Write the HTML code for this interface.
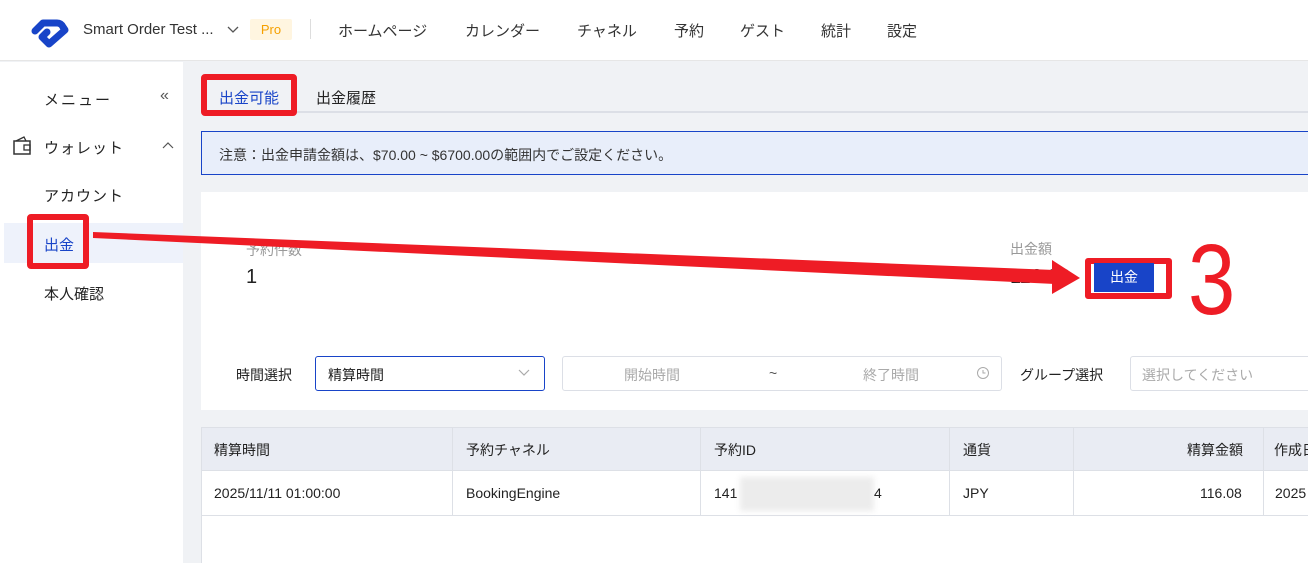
<!DOCTYPE html>
<html><head><meta charset="utf-8"><style>
*{box-sizing:border-box;margin:0;padding:0}
body{width:1308px;height:563px;overflow:hidden;position:relative;background:#f0f2f5;font-family:"Liberation Sans","Noto Sans CJK JP",sans-serif;color:#222;font-size:14px}
.a{position:absolute;white-space:nowrap}
</style></head><body>
<div class="a" style="left:0;top:0;width:1308px;height:61px;background:#fff;border-bottom:1px solid #e6e6e6"></div>
<svg class="a" style="left:25px;top:8px" width="50" height="42" viewBox="0 0 50 42"><path d="M10 23 L18 15 L32 15 Q36 15 38 19 L40 22 L24 36 L17 29 L22 24" fill="none" stroke="#1844c8" stroke-width="7" stroke-linejoin="round" stroke-linecap="round"/></svg>
<div class="a" style="left:83px;top:21px;font-size:15px;color:#333">Smart Order Test ...</div>
<svg class="a" style="left:227px;top:25px" width="12" height="10"><path d="M1 2 L6 7 L11 2" stroke="#555" fill="none" stroke-width="1.3"/></svg>
<div class="a" style="left:250px;top:19px;width:42px;height:21px;background:#fff5e0;color:#f5a000;font-size:13px;text-align:center;line-height:21px;border-radius:2px">Pro</div>
<div class="a" style="left:310px;top:19px;width:1px;height:20px;background:#ddd"></div>
<div class="a" style="left:338px;top:20px;font-size:15px;color:#333">ホームページ</div>
<div class="a" style="left:465px;top:20px;font-size:15px;color:#333">カレンダー</div>
<div class="a" style="left:577px;top:20px;font-size:15px;color:#333">チャネル</div>
<div class="a" style="left:674px;top:20px;font-size:15px;color:#333">予約</div>
<div class="a" style="left:740px;top:20px;font-size:15px;color:#333">ゲスト</div>
<div class="a" style="left:821px;top:20px;font-size:15px;color:#333">統計</div>
<div class="a" style="left:887px;top:20px;font-size:15px;color:#333">設定</div>

<div class="a" style="left:0;top:62px;width:183px;height:501px;background:#fff"></div>
<div class="a" style="left:44px;top:89px;font-size:15px;letter-spacing:2px">メニュー</div>
<div class="a" style="left:160px;top:87px;font-size:16px;color:#555">«</div>
<svg class="a" style="left:12px;top:136px" width="22" height="20"><rect x="2" y="5" width="16" height="13" fill="none" stroke="#333" stroke-width="1.5"/><path d="M4 5 L12 1 L14 5" fill="none" stroke="#333" stroke-width="1.3"/><rect x="12" y="9" width="6" height="5" fill="none" stroke="#333" stroke-width="1.3"/></svg>
<div class="a" style="left:44px;top:137px;font-size:15px;letter-spacing:1px">ウォレット</div>
<svg class="a" style="left:162px;top:142px" width="12" height="8"><path d="M1 6 L6 1 L11 6" stroke="#555" fill="none" stroke-width="1.2"/></svg>
<div class="a" style="left:44px;top:185px;font-size:15px;letter-spacing:1px">アカウント</div>
<div class="a" style="left:4px;top:223px;width:179px;height:40px;background:#eef2fb"></div>
<div class="a" style="left:44px;top:234px;font-size:15px;color:#1844c8">出金</div>
<div class="a" style="left:44px;top:283px;font-size:15px">本人確認</div>

<div class="a" style="left:201px;top:111px;width:1107px;height:2px;background:#dcdfe6"></div>
<div class="a" style="left:219px;top:87px;font-size:15px;color:#1844c8">出金可能</div>
<div class="a" style="left:316px;top:87px;font-size:15px">出金履歴</div>

<div class="a" style="left:201px;top:131px;width:1110px;height:44px;background:#e8eefa;border:1px solid #1844c8"></div>
<div class="a" style="left:219px;top:145px;font-size:14px;color:#333">注意：出金申請金額は、$70.00 ~ $6700.00の範囲内でご設定ください。</div>

<div class="a" style="left:201px;top:192px;width:1107px;height:218px;background:#fff"></div>
<div class="a" style="left:246px;top:240px;font-size:14px;color:#999">予約件数</div>
<div class="a" style="left:246px;top:266px;font-size:20px;color:#222">1</div>
<div class="a" style="left:1010px;top:239px;font-size:14px;color:#999">出金額</div>
<div class="a" style="left:1010px;top:266px;font-size:20px;color:#222">116.08</div>

<div class="a" style="left:236px;top:365px;font-size:14px">時間選択</div>
<div class="a" style="left:315px;top:356px;width:230px;height:35px;border:1px solid #1844c8;border-radius:3px;background:#fff"></div>
<div class="a" style="left:328px;top:365px;font-size:14px">精算時間</div>
<svg class="a" style="left:518px;top:369px" width="12" height="8"><path d="M1 1 L6 6 L11 1" stroke="#aaa" fill="none" stroke-width="1.2"/></svg>
<div class="a" style="left:562px;top:356px;width:440px;height:35px;border:1px solid #dcdfe6;border-radius:3px;background:#fff"></div>
<div class="a" style="left:624px;top:365px;font-size:14px;color:#aaa">開始時間</div>
<div class="a" style="left:769px;top:365px;font-size:14px;color:#555">~</div>
<div class="a" style="left:863px;top:365px;font-size:14px;color:#aaa">終了時間</div>
<svg class="a" style="left:976px;top:366px" width="14" height="14"><circle cx="7" cy="7" r="5.5" fill="none" stroke="#aaa"/><path d="M7 4 V7 H9.5" fill="none" stroke="#aaa"/></svg>
<div class="a" style="left:1020px;top:365px;font-size:14px">グループ選択</div>
<div class="a" style="left:1130px;top:356px;width:190px;height:35px;border:1px solid #dcdfe6;border-radius:3px;background:#fff"></div>
<div class="a" style="left:1142px;top:365px;font-size:14px;color:#aaa">選択してください</div>

<div class="a" style="left:201px;top:427px;width:1107px;height:136px;background:#fff"></div>
<div class="a" style="left:201px;top:427px;width:1107px;height:44px;background:#e9ecf3;border-top:1px solid #dde0e6;border-bottom:1px solid #dde0e6"></div>
<div class="a" style="left:201px;top:515px;width:1107px;height:1px;background:#dde0e6"></div>
<div class="a" style="left:201px;top:427px;width:1px;height:136px;background:#dde0e6"></div>
<div class="a" style="left:452px;top:427px;width:1px;height:89px;background:#dde0e6"></div>
<div class="a" style="left:700px;top:427px;width:1px;height:89px;background:#dde0e6"></div>
<div class="a" style="left:949px;top:427px;width:1px;height:89px;background:#dde0e6"></div>
<div class="a" style="left:1073px;top:427px;width:1px;height:89px;background:#dde0e6"></div>
<div class="a" style="left:1263px;top:427px;width:1px;height:89px;background:#dde0e6"></div>
<div class="a" style="left:214px;top:440px">精算時間</div>
<div class="a" style="left:466px;top:440px">予約チャネル</div>
<div class="a" style="left:714px;top:440px">予約ID</div>
<div class="a" style="left:963px;top:440px">通貨</div>
<div class="a" style="left:1187px;top:440px">精算金額</div>
<div class="a" style="left:1274px;top:440px">作成日</div>
<div class="a" style="left:214px;top:485px">2025/11/11 01:00:00</div>
<div class="a" style="left:466px;top:485px">BookingEngine</div>
<div class="a" style="left:714px;top:485px">141</div>
<div class="a" style="left:740px;top:477px;width:134px;height:34px;background:#ececec;filter:blur(3px)"></div>
<div class="a" style="left:874px;top:485px">4</div>
<div class="a" style="left:963px;top:485px">JPY</div>
<div class="a" style="left:1200px;top:485px">116.08</div>
<div class="a" style="left:1275px;top:485px">2025</div>

<div class="a" style="left:1085px;top:258px;width:87px;height:41px;border:6px solid #ee1c25;border-radius:3px;background:#fff"></div>
<div class="a" style="left:1094px;top:263px;width:60px;height:29px;background:#1844c8;color:#fff;font-size:14px;text-align:center;line-height:29px">出金</div>
<div class="a" style="left:1188px;top:230px;font-size:100px;color:#ee1c25;line-height:1;transform:scaleX(0.85);transform-origin:left top">3</div>

<div class="a" style="left:201px;top:74px;width:96px;height:42px;border:6px solid #ee1c25;border-radius:4px"></div>
<div class="a" style="left:27px;top:214px;width:62px;height:55px;border:6px solid #ee1c25;border-radius:4px"></div>
<svg class="a" style="left:0;top:0" width="1308" height="563"><path d="M93 232 L93 238 L1055 284 L1055 270 Z" fill="#ee1c25"/><path d="M1052 260 L1080 278 L1052 294 Z" fill="#ee1c25"/></svg>
</body></html>
